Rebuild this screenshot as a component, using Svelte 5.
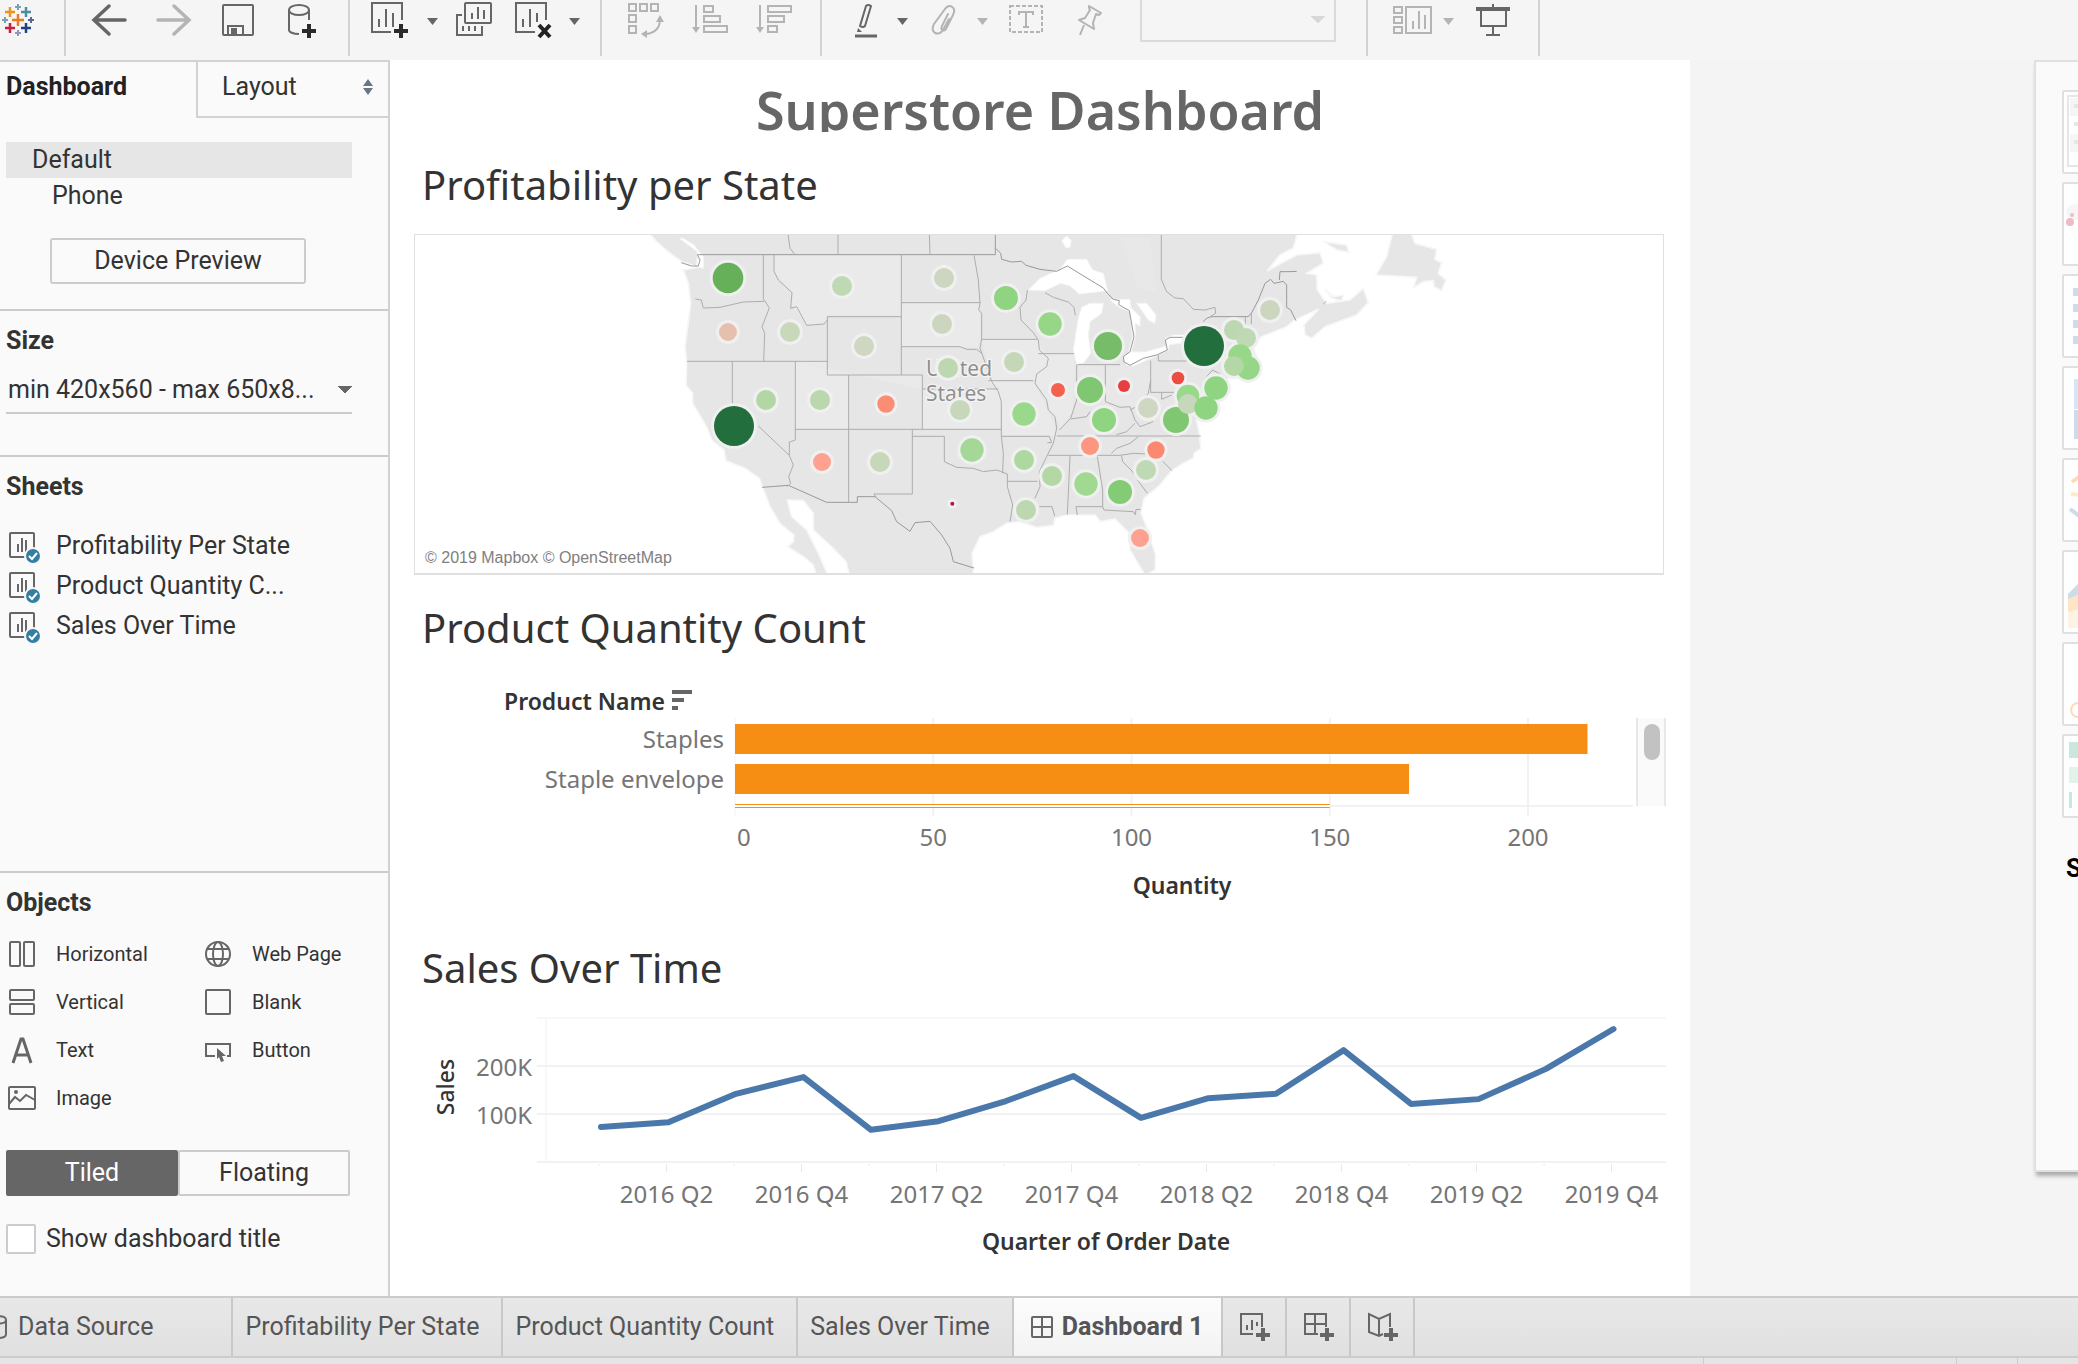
<script lang="ts">
	type Mark = [x: number, y: number, r: number, color: string];

	let view = $state('Default');
	let layoutMode = $state('Tiled');
	let activeTab = $state('Dashboard 1');
	let showTitle = $state(false);

	const sheets = ['Profitability Per State', 'Product Quantity C...', 'Sales Over Time'];

	const objects = [
		{ id: 'horizontal', label: 'Horizontal' },
		{ id: 'web', label: 'Web Page' },
		{ id: 'vertical', label: 'Vertical' },
		{ id: 'blank', label: 'Blank' },
		{ id: 'text', label: 'Text' },
		{ id: 'button', label: 'Button' },
		{ id: 'image', label: 'Image' }
	];

	const tabs = ['Profitability Per State', 'Product Quantity Count', 'Sales Over Time'];

	// one mark per state: size and color both encode profit
	const marks: Mark[] = [
		[324, 174, 46, '#66b059'],
		[324, 336, 27, '#e6c0ae'],
		[342, 618, 60, '#226e3c'],
		[666, 198, 30, '#c0d9b5'],
		[510, 336, 30, '#c8d9bb'],
		[732, 378, 30, '#cdd7c1'],
		[972, 174, 30, '#ccd6c0'],
		[966, 312, 30, '#ccd6be'],
		[1158, 234, 36, '#8ed481'],
		[1290, 312, 35, '#95d787'],
		[984, 444, 30, '#bdd8b1'],
		[1182, 426, 30, '#c4d8b7'],
		[438, 540, 30, '#b2d7a5'],
		[600, 540, 30, '#bad7ad'],
		[798, 552, 26, '#fc8d75'],
		[1314, 510, 21, '#f4624f'],
		[1020, 570, 30, '#c6d8b9'],
		[1212, 582, 35, '#9ad88b'],
		[606, 726, 27, '#ffa190'],
		[780, 726, 30, '#c6d8b9'],
		[1056, 690, 35, '#a5d898'],
		[1212, 720, 30, '#add89f'],
		[1296, 768, 30, '#b3d7a5'],
		[997, 851, 6, '#b5163a'],
		[1218, 870, 30, '#bdd8b1'],
		[1464, 378, 42, '#77bd69'],
		[1410, 510, 39, '#80c772'],
		[1512, 498, 18, '#e63f3f'],
		[1674, 474, 19, '#eb4c43'],
		[1452, 600, 36, '#8fd581'],
		[1584, 564, 30, '#cdd7c1'],
		[1668, 600, 39, '#80c772'],
		[1410, 678, 27, '#fd957f'],
		[1608, 690, 26, '#fb8970'],
		[1578, 750, 30, '#c0d9b5'],
		[1398, 792, 35, '#a1d993'],
		[1500, 816, 36, '#83cb75'],
		[1560, 954, 27, '#ffa190'],
		[1752, 378, 60, '#226e3c'],
		[1842, 330, 30, '#bcd8b0'],
		[1878, 354, 30, '#c0d9b5'],
		[1884, 444, 35, '#95d787'],
		[1860, 408, 35, '#96d788'],
		[1842, 438, 30, '#b3d7a5'],
		[1704, 528, 34, '#9ad88b'],
		[1704, 552, 30, '#c6d8b9'],
		[1788, 504, 35, '#8fd581'],
		[1758, 564, 35, '#8fd581'],
		[1950, 270, 30, '#ccd6be']
	];

	const products = [
		{ name: 'Staples', quantity: 215 },
		{ name: 'Staple envelope', quantity: 170 }
	];
	const quantityTicks = [50, 100, 150, 200];
	const qx = (q: number) => 321 + q * 3.965;

	const sales = [73, 83, 142, 177, 67, 85, 127, 179, 92, 133, 142, 233, 121, 131, 194, 277];
	const sx = (i: number) => 187 + i * 67.5;
	const sy = (v: number) => 152 - v * 0.48;
	const salesLine = sales.map((v, i) => `${sx(i)},${sy(v)}`).join(' ');
	const quarter = (i: number) => `${2016 + Math.floor(i / 4)} Q${(i % 4) + 1}`;
</script>

{#snippet caret()}
	<svg class="caret" viewBox="0 0 16 40" aria-hidden="true"><path d="M3 18h11l-5.500 7z" fill="currentColor" /></svg>
{/snippet}

<div class="app">
	<header class="toolbar">
		<div class="group logo">
			<svg class="icon" viewBox="0 0 40 40" fill="none" aria-label="Tableau" role="img">
				<path d="M18 14v12M12 20h12" stroke="#eb7b23" stroke-width="2.500" />
				<path d="M10 7v10M5 12h10" stroke="#eb9423" stroke-width="2.500" />
				<path d="M26 7v10M21 12h10" stroke="#4e8da0" stroke-width="2.500" />
				<path d="M10 23v10M5 28h10" stroke="#c8213b" stroke-width="2.500" />
				<path d="M26 23v10M21 28h10" stroke="#1f447e" stroke-width="2.500" />
				<path d="M18 4v6M15 7h6M5 17v6M2 20h6" stroke="#78a4b2" stroke-width="2" />
				<path d="M31 17v6M28 20h6" stroke="#5b6591" stroke-width="2" />
				<path d="M18 30v6M15 33h6" stroke="#9097b8" stroke-width="2" />
			</svg>
		</div>

		<div class="group roomy">
			<button type="button" aria-label="Undo">
				<svg class="icon" viewBox="0 0 40 40" fill="none" stroke="#666" stroke-width="3.500" stroke-linecap="round">
					<path d="M35 20H5M19 6L4 20l15 14" />
				</svg>
			</button>
			<button type="button" aria-label="Redo" disabled>
				<svg class="icon" viewBox="0 0 40 40" fill="none" stroke="#b4b4b4" stroke-width="3.500" stroke-linecap="round">
					<path d="M4 20h30M20 6l15 14-15 14" />
				</svg>
			</button>
			<button type="button" aria-label="Save">
				<svg class="icon" viewBox="0 0 40 40" fill="none" stroke="#666" stroke-width="2">
					<rect x="5" y="5" width="30" height="30" rx="1" />
					<path d="M10 35v-9h15v9" />
					<path d="M14 29h4v5h-4z" fill="#666" />
				</svg>
			</button>
			<button type="button" aria-label="New data source">
				<svg class="icon" viewBox="0 0 40 40" fill="none" stroke="#666" stroke-width="2">
					<ellipse cx="17" cy="10" rx="10" ry="5" />
					<path d="M7 10v20c0 2 4 4 10 4M27 10v10" />
					<path d="M27 24v14M20 31h14" stroke="#2b2b2b" stroke-width="4" />
				</svg>
			</button>
		</div>

		<div class="group sheet-tools">
			<div class="split">
				<button type="button" aria-label="New worksheet">
					<svg class="icon" viewBox="0 0 40 40" fill="none" stroke="#666" stroke-width="2">
						<path d="M32 20V3H2v29h19" />
						<path d="M9 27v-8M16 27V9M23 27V13" />
						<path d="M31 24v14M24 31h14" stroke="#2b2b2b" stroke-width="4" />
					</svg>
				</button>
				<button type="button" aria-label="New worksheet options">{@render caret()}</button>
			</div>
			<button type="button" aria-label="Duplicate">
				<svg class="icon" viewBox="0 0 40 40" fill="none" stroke="#666" stroke-width="2">
					<rect x="9" y="3" width="26" height="20" rx="1" />
					<path d="M16 19v-6M22 19V7M28 19v-9" />
					<path d="M6 15H1v20h25v-9M7 31v-5M13 31v-5M19 31v-5" />
				</svg>
			</button>
			<div class="split">
				<button type="button" aria-label="Clear sheet">
					<svg class="icon" viewBox="0 0 40 40" fill="none" stroke="#666" stroke-width="2">
						<path d="M34 20V3H4v29h19" />
						<path d="M11 27v-8M18 27V9M25 22v-9" />
						<path d="M27 25l11 12M38 25L27 37" stroke="#222" stroke-width="4" />
					</svg>
				</button>
				<button type="button" aria-label="Clear sheet options">{@render caret()}</button>
			</div>
		</div>

		<div class="group roomy">
			<button type="button" aria-label="Swap rows and columns" disabled>
				<svg class="icon" viewBox="0 0 40 40" fill="none" stroke="#b4b4b4" stroke-width="2">
					<path d="M3 4h7v7H3zM14 4h7v7h-7zM25 4h7v7h-7zM3 15h7v7H3zM3 26h7v7H3z" />
					<path d="M34 19c0 9-5 14-14 15" />
					<path d="M34 15l4 7h-8zM15 34l6-4v8z" fill="#b4b4b4" stroke="none" />
				</svg>
			</button>
			<button type="button" aria-label="Sort ascending" disabled>
				<svg class="icon" viewBox="0 0 40 40" fill="none" stroke="#b4b4b4" stroke-width="2">
					<path d="M6 5v24" />
					<path d="M2 27h8l-4 6z" fill="#b4b4b4" stroke="none" />
					<path d="M14 6h9v6h-9zM14 16h16v6H14zM14 26h23v6H14z" />
				</svg>
			</button>
			<button type="button" aria-label="Sort descending" disabled>
				<svg class="icon" viewBox="0 0 40 40" fill="none" stroke="#b4b4b4" stroke-width="2">
					<path d="M6 5v24" />
					<path d="M2 27h8l-4 6z" fill="#b4b4b4" stroke="none" />
					<path d="M14 6h23v6H14zM14 16h16v6H14zM14 26h9v6h-9z" />
				</svg>
			</button>
		</div>

		<div class="group">
			<div class="split">
				<button type="button" aria-label="Highlight">
					<svg class="icon" viewBox="0 0 40 40" fill="none" stroke="#666" stroke-width="2">
						<path d="M20 6q2-2 5 0L19 26q-2 2-5 0z" />
						<path d="M12 28l4 4h-5z" fill="#666" stroke="none" />
						<path d="M9 36h22" stroke-width="3" />
					</svg>
				</button>
				<button type="button" aria-label="Highlight options">{@render caret()}</button>
			</div>
			<div class="split">
				<button type="button" aria-label="Group members" disabled>
					<svg class="icon" viewBox="0 0 40 40" fill="none" stroke="#b4b4b4" stroke-width="2" stroke-linecap="round">
						<path d="M22 14l-6 12c-2 4 2 6 4 3l7-14c4-8-4-12-8-6L8 24c-5 9 5 13 9 6l6-11" />
					</svg>
				</button>
				<button type="button" aria-label="Group options" disabled>{@render caret()}</button>
			</div>
			<button type="button" aria-label="Show mark labels" disabled>
				<svg class="icon" viewBox="0 0 40 40" fill="none" stroke="#b4b4b4" stroke-width="2">
					<rect x="4" y="6" width="32" height="26" stroke-dasharray="4 2" />
					<path d="M13 15v-3h14v3M20 12v15M17 27h6" />
				</svg>
			</button>
			<button type="button" aria-label="Fix axes" disabled>
				<svg class="icon" viewBox="0 0 40 40" fill="none" stroke="#b4b4b4" stroke-width="2" stroke-linejoin="round">
					<path d="M27 6l12 7-2 2-3-1-3 9 1 6-15-9 6-2 5-8-1-2zM22 25l-4 10" />
				</svg>
			</button>
			<select class="fit" aria-label="Fit" disabled><option></option></select>
		</div>

		<div class="group">
			<div class="split">
				<button type="button" aria-label="Show or hide cards" disabled>
					<svg class="icon" viewBox="0 0 40 40" fill="none" stroke="#b4b4b4" stroke-width="2">
						<path d="M2 7h8v6H2zM2 17h8v6H2zM2 27h8v6H2zM14 7h25v26H14z" />
						<path d="M21 29v-8M27 29V11M33 29V15" />
					</svg>
				</button>
				<button type="button" aria-label="Card options" disabled>{@render caret()}</button>
			</div>
			<button type="button" aria-label="Presentation mode">
				<svg class="icon" viewBox="0 0 40 40" fill="none" stroke="#666" stroke-width="2">
					<path d="M21 4v3M9 11v15h25V11M21 26v9M14 35h14" />
					<path d="M4 9h34" stroke-width="4" />
				</svg>
			</button>
		</div>
	</header>

	<div class="workspace">
		<aside class="sidebar">
			<div class="pane-tabs">
				<button type="button" class="pane-tab current">Dashboard</button>
				<button type="button" class="pane-tab other">
					Layout
					<svg class="spin" viewBox="0 0 12 18" fill="#687587" aria-hidden="true"><path d="M1 8l5-7 5 7zM1 10l5 7 5-7z" /></svg>
				</button>
			</div>

			<section class="devices">
				<button type="button" class="device" class:selected={view === 'Default'} onclick={() => (view = 'Default')}>Default</button>
				<button type="button" class="device phone" class:selected={view === 'Phone'} onclick={() => (view = 'Phone')}>Phone</button>
				<button type="button" class="preview">Device Preview</button>
			</section>

			<section class="size">
				<label for="size">Size</label>
				<select id="size">
					<option>min 420x560 - max 650x8...</option>
				</select>
			</section>

			<section class="sheets">
				<h3>Sheets</h3>
				<ul>
					{#each sheets as sheet (sheet)}
						<li>
							<svg class="sheet-icon" viewBox="0 0 36 36" fill="none" stroke="#666" stroke-width="2" aria-hidden="true">
								<rect x="4" y="5" width="24" height="24" rx="1" />
								<path d="M12 24v-8M16 24V10M20 24V12" />
								<circle cx="27" cy="28" r="8" fill="#317fa2" stroke="#fafafa" />
								<path d="M23 28l3 3 5-6" stroke="#fff" />
							</svg>
							{sheet}
						</li>
					{/each}
				</ul>
			</section>

			<section class="objects">
				<h3>Objects</h3>
				<div class="object-grid">
					{#each objects as object (object.id)}
						<button type="button" class="object">
							<svg viewBox="0 0 30 30" fill="none" stroke="#666" stroke-width="2" aria-hidden="true">
								{#if object.id === 'horizontal'}
									<rect x="4" y="3" width="10" height="24" rx="1" />
									<rect x="18" y="3" width="10" height="24" rx="1" />
								{:else if object.id === 'vertical'}
									<rect x="4" y="3" width="24" height="10" rx="1" />
									<rect x="4" y="17" width="24" height="10" rx="1" />
								{:else if object.id === 'web'}
									<circle cx="16" cy="15" r="12" />
									<ellipse cx="16" cy="15" rx="5" ry="12" />
									<path d="M5 10h22M5 20h22" />
								{:else if object.id === 'blank'}
									<rect x="4" y="3" width="24" height="24" rx="1" />
								{:else if object.id === 'text'}
									<path d="M7 28l8-24h2l8 24M9 20h14" stroke-width="3" />
								{:else if object.id === 'button'}
									<path d="M13 21H4V9h24v12h-3" />
									<path d="M15 13l9 8h-4l2 5-3 1-2-5-2 2z" fill="#666" stroke="none" />
								{:else}
									<rect x="3" y="4" width="26" height="22" rx="1" />
									<path d="M3 21l6-7 5 4 6-6 9 5" />
									<circle cx="10" cy="9" r="2" fill="#666" stroke="none" />
								{/if}
							</svg>
							{object.label}
						</button>
					{/each}
				</div>
				<div class="toggle">
					{#each ['Tiled', 'Floating'] as mode}
						<button type="button" class:on={layoutMode === mode} aria-pressed={layoutMode === mode} onclick={() => (layoutMode = mode)}>{mode}</button>
					{/each}
				</div>
				<label class="check">
					<input type="checkbox" bind:checked={showTitle} />
					Show dashboard title
				</label>
			</section>
		</aside>

		<main class="dashboard">
			<h1>Superstore Dashboard</h1>

			<section>
				<h2>Profitability per State</h2>
				<div class="map">
					<svg viewBox="-615 45 3744 1014" role="img" aria-label="Profit by state">
						<g fill="#e6e6e6" stroke="#f7f7f7" stroke-width="5">
							<path
								d="M80 30L110 66 140 92 185 125 215 135 235 142 190 150 205 190 212 250 203 320 195 380 200 425 198 495 218 520 218 550 245 595 262 625 275 660 312 690 318 722 375 745 418 775 428 802 450 860 480 910 522 945 520 965 503 980 550 1010 580 1035 590 1070 625 1070 600 1010 560 930 515 890 502 840 550 842 580 880 580 930 640 985 678 1025 690 1070
								1060 1070 1060 1045 1056 1000 1080 950 1120 935 1160 910 1200 905 1250 922 1300 916 1305 895 1340 885 1425 885 1442 905 1485 897 1525 937 1530 990 1560 1040 1575 1065 1605 1050 1607 1005 1580 920 1563 880 1572 835 1615 800 1655 752 1690 730 1720 715 1722 700 1743 685 1738 640 1730 600
								1770 570 1815 510 1830 460 1920 440 1900 380 1925 350 2000 320 2025 300 2095 268 2052 315 2055 345 2075 355 2115 320 2210 285 2245 248 2230 205 2190 240 2120 250 2092 210 2090 165 2060 160 2110 130 2100 98 2030 105 1942 152 1980 105 2020 85 2035 30z"
							/>
							<path d="M2110 65L2180 75 2187 97 2150 90zM2320 30L2300 110 2268 165 2390 172 2380 203 2410 185 2440 182 2442 200 2465 212 2478 180 2455 160 2465 128 2445 118 2450 88 2385 70 2370 30zM2115 208L2140 230 2170 225 2165 243 2135 235z" />
						</g>
						<g fill="#eaeaea">
							<path d="M462 106h380v180h-220v25l-60 5-45-60v-40l-55-60zM844 250h236l2 105-12 30-30-5h-196zM1085 360h165l35 55-38 65h-130zM1110 484h130l50 100 20 60h-165v-110zM1255 402h108l-5 170-35 50-80-135z" />
							<path d="M526 424h96v41h284v162h236v-120h-236M526 424v204h160v-163z" />
							<path d="M1332 434h260v80l-40 50-100-15zM1500 50h90l20 170-60-20z" opacity=".5" />
						</g>
						<g fill="#fff" stroke="#f5f5f5" stroke-width="3">
							<path d="M178 55L205 75 232 95 230 140 250 145 250 110 240 98 222 75 190 55z" />
							<path d="M1225 210L1260 175 1320 148 1342 118 1400 118 1418 150 1450 160 1463 212 1440 215 1378 222 1350 198 1322 190 1275 212z" />
							<path d="M1385 262L1410 250 1450 250 1445 280 1410 305 1405 345 1412 400 1390 430 1370 432 1360 390 1374 300z" />
							<path d="M1470 240L1530 238 1532 262 1560 290 1560 318 1545 310 1546 350 1534 395 1525 398 1538 350 1530 275 1495 260zM1550 250L1580 250 1608 285 1605 310 1585 300z" />
							<path d="M1508 412L1530 396 1575 396 1640 378 1636 355 1660 345 1700 345 1697 368 1648 374 1645 390 1600 412 1540 438 1520 436z" />
							<path d="M1325 62L1340 48 1354 62 1350 82 1338 84z" />
						</g>
						<g fill="none" stroke="#adadad" stroke-width="3">
							<path stroke="#999" d="M184 128L215 138 235 138 240 120 232 104H1126V42M1128 86L1142 100 1145 118 1175 126 1205 124 1218 136 1260 148 1310 154 1342 138 1450 204 1462 220 1480 238 1498 242 1496 254 1528 272 1542 350 1530 395 1510 410 1512 426 1530 436 1570 415 1610 405 1642 390 1636 360 1650 352 1695 352M1750 305Q1760 290 1780 290H1885L1895 278 1915 240 1935 190 1952 178 1962 190 1990 184 2000 195V262L2012 270 2028 302M1978 180L1980 155 2010 155 2030 154" />
							<path stroke="#999" d="M426 802L505 796 620 847H712V830H765L815 872 830 905 870 934 885 908 930 904 965 945 990 985 1000 1025 1062 1044" />
							<path d="M504 42L510 85 525 104M654 42V104M928 42L930 104M1624 42V178L1640 215 1665 234 1690 236 1720 268 1755 270 1785 262 1787 280 1770 290" />
							<path d="M430 104V236L448 264 426 320 434 340 431 424M226 237L244 240 250 264 300 262 370 246 432 244M201 424H622M337 424V560M415 618L508 706M526 424V660L508 666 508 706 520 735 506 770 512 790 502 800M462 104V154L475 180 516 218 512 265 530 260 560 316 612 312 622 300" />
							<path d="M844 104V465M622 290H844M622 290V465H907V628M686 465V847M526 628H1144M844 248H1082M844 380H1020L1040 388 1070 388 1085 400M1062 106L1075 180 1080 250 1076 270 1085 280 1085 355 1080 385 1100 440 1115 484 1135 515 1144 545V648L1150 700 1148 760" />
							<path d="M907 507H1135M877 628V822H762L768 832M877 649H973V725L1010 742 1060 745 1090 755 1130 750 1162 762V800L1178 855 1170 905M1144 649H1288L1295 668 1282 668M1162 784H1252M1083 358H1252M1105 482H1240M1255 401H1362M1222 210L1218 240 1200 262 1203 300 1240 338 1255 360 1258 390 1285 415 1280 440 1250 462 1245 490 1280 540 1285 570 1305 590 1310 625 1300 670 1280 710 1258 755 1260 800 1245 835M1275 218L1300 232 1345 246 1362 262 1366 286" />
							<path d="M1370 434V540L1352 595 1318 630M1456 436V545L1500 562 1530 560 1545 600 1560 620 1600 605M1372 434H1500M1592 422V517H1760M1615 405V423H1770M1592 480L1585 520 1550 560 1530 570M1352 597L1400 590 1410 575M1310 648H1742M1285 706H1500M1474 700L1490 685 1530 670 1555 650M1545 610L1520 635 1490 644" />
							<path d="M1350 708L1342 884M1432 710L1448 810V860L1452 870 1540 875 1546 884 1548 868 1562 869M1368 860H1448M1368 860L1372 885M1258 860H1296L1304 888M1500 706L1540 700 1585 702M1505 708L1508 725 1535 752 1560 790 1582 820M1628 724L1656 752M1625 517V538L1655 525M1876 290V320M1894 278V312M1760 470L1778 450 1800 462M2110 253L2118 244" />
						</g>
						<text class="country" x="918" y="468">United</text>
						<text class="country" x="918" y="543">States</text>
						{#each marks as [x, y, r]}
							<circle cx={x} cy={y} r={r + 9} fill="#f0f0f0" />
						{/each}
						{#each marks as [x, y, r, color]}
							<circle cx={x} cy={y} {r} fill={color} />
						{/each}
					</svg>
					<small>© 2019 Mapbox © OpenStreetMap</small>
				</div>
			</section>

			<section>
				<h2>Product Quantity Count</h2>
				<svg class="chart quantity" viewBox="0 0 1252 235" role="img" aria-label="Quantity by product name">
					<text class="strong" x="90" y="30">Product Name</text>
					<path d="M258 10h20v4h-20zM258 18h12v4h-12zM258 26h6v4h-6z" fill="#666" />
					<path d="M321 38v98" stroke="#f3f3f3" />
					{#each quantityTicks as tick}
						<path d="M{qx(tick)} 38v98" stroke="#f2f2f2" stroke-width="2" />
						<text class="axis" x={qx(tick)} y="166" text-anchor="middle">{tick}</text>
					{/each}
					<text class="axis" x="323" y="166">0</text>
					<path d="M321 126h898" stroke="#f2f2f2" stroke-width="2" />
					{#each products as product, i}
						<text class="axis" x="310" y={68 + i * 40} text-anchor="end">{product.name}</text>
						<rect x="321" y={44 + i * 40} width={qx(product.quantity) - 321} height="30" fill="#f68e13" />
					{/each}
					<rect x="321" y="124" width={qx(150) - 321} height="4" fill="#fff" />
					<path d="M321 124.500H{qx(150)}M321 127.500H{qx(150)}" stroke="#f68e13" />
					<rect x="1222" y="38" width="30" height="88" fill="#fafafa" />
					<path d="M1223 38v88M1251 38v88" stroke="#e8e8e8" stroke-width="2" />
					<rect x="1230" y="44" width="16" height="36" rx="8" fill="#c2c2c2" />
					<text class="strong" x="768" y="214" text-anchor="middle">Quantity</text>
				</svg>
			</section>

			<section>
				<h2>Sales Over Time</h2>
				<svg class="chart" viewBox="0 0 1252 250" role="img" aria-label="Sales by quarter">
					<path d="M123 8h1129M132 8v144" stroke="#f0f0f0" />
					<path d="M123 56h1129M123 104h1129M123 152h1129" stroke="#f2f2f2" stroke-width="2" />
					<text class="strong side" x="-77" y="40" transform="rotate(-90)" text-anchor="middle">Sales</text>
					<text class="axis" x="118" y="66" text-anchor="end">200K</text>
					<text class="axis" x="118" y="114" text-anchor="end">100K</text>
					{#each sales as _, i}
						<path d="M{sx(i) - 2} 154v{i % 2 ? 8 : 2}" stroke="#e8e8e8" />
						{#if i % 2}
							<text class="axis" x={sx(i) - 2} y="193" text-anchor="middle">{quarter(i)}</text>
						{/if}
					{/each}
					<polyline points={salesLine} fill="none" stroke="#4b78aa" stroke-width="6" stroke-linejoin="round" stroke-linecap="round" />
					<text class="strong" x="692" y="240" text-anchor="middle">Quarter of Order Date</text>
				</svg>
			</section>
		</main>

		<div class="gutter">
			<aside class="show-me">
				<ul>
					<li><svg viewBox="0 0 84 80"><path d="M4 4h74v70H4z" fill="#fff" stroke="#e6e6e6" stroke-width="2" /><path d="M6 6h70v18H6zM6 42h70v18H6z" fill="#f5f5f5" /><path d="M10 14h14M10 32h14M10 50h14M34 14h30M34 32h30M34 50h30" stroke="#e6e6e6" stroke-width="4" /></svg></li>
					<li><svg viewBox="0 0 84 80"><ellipse cx="12" cy="28" rx="10" ry="8" fill="#f5f5f5" /><circle cx="6" cy="38" r="4" fill="#edbcc6" /><circle cx="8" cy="31" r="2" fill="#edbcc6" /></svg></li>
					<li><svg viewBox="0 0 84 80" fill="#ccdce9"><path d="M9 12h60v8H9zM9 28h50v8H9zM9 44h40v8H9zM9 60h30v8H9z" /></svg></li>
					<li><svg viewBox="0 0 84 80"><path d="M10 11h50v30H10z" fill="#d6e6f2" /><path d="M10 42h50v29H10z" fill="#ccdce9" /></svg></li>
					<li><svg viewBox="0 0 84 80" fill="none" stroke-width="4"><path d="M8 22L30 6" stroke="#fcdcb5" /><path d="M7 34L40 38" stroke="#fcebc8" /><path d="M6 49L26 64" stroke="#ccdce9" /></svg></li>
					<li><svg viewBox="0 0 84 80"><path d="M4 42L28 18V76H4z" fill="#ccdce9" /><path d="M4 47L28 36V76H4z" fill="#fee5c6" /><path d="M4 60L28 54V76H4z" fill="#fef3e5" /></svg></li>
					<li><svg viewBox="0 0 84 80" fill="none"><circle cx="14" cy="66" r="7" stroke="#fddcbd" stroke-width="2" /></svg></li>
					<li><svg viewBox="0 0 84 80"><path d="M5 6h50v16H5zM5 56h3v16H5z" fill="#c9e7dc" /><path d="M5 31h40v16H5z" fill="#e2f3eb" /></svg></li>
				</ul>
				<strong>Select</strong>
			</aside>
		</div>
	</div>

	<nav class="sheet-tabs" aria-label="Sheets">
		<button type="button" class="tab source">
			<svg viewBox="0 0 8 26" fill="none" stroke="#666" stroke-width="2" aria-hidden="true"><path d="M-6 6c0-5 12-5 12 0s-12 4-12 0M6 6v14c0 3-3 4-8 4" /></svg>
			Data Source
		</button>
		{#each tabs as tab (tab)}
			<button type="button" class="tab" class:active={activeTab === tab} onclick={() => (activeTab = tab)}>{tab}</button>
		{/each}
		<button type="button" class="tab board" class:active={activeTab === 'Dashboard 1'} onclick={() => (activeTab = 'Dashboard 1')}>
			<svg viewBox="0 0 24 24" fill="none" stroke="#666" stroke-width="2" aria-hidden="true"><rect x="2" y="2" width="20" height="20" rx="1" /><path d="M2 12h20M12 2v20" /></svg>
			Dashboard 1
		</button>
		<button type="button" class="tab add" aria-label="New worksheet">
			<svg viewBox="0 0 32 32" fill="none" stroke="#666" stroke-width="2"><path d="M24 16V3H3v20h12M9 19v-5M14 19V9M19 15v-4" /><path d="M25 17v13M18 24h14" stroke-width="4" /></svg>
		</button>
		<button type="button" class="tab add" aria-label="New dashboard">
			<svg viewBox="0 0 32 32" fill="none" stroke="#666" stroke-width="2"><path d="M24 16V3H3v20h13M3 13h21M13 3v20" /><path d="M25 17v13M18 24h14" stroke-width="4" /></svg>
		</button>
		<button type="button" class="tab add" aria-label="New story">
			<svg viewBox="0 0 32 32" fill="none" stroke="#666" stroke-width="2"><path d="M24 16V3l-11 5L3 3v18l10 4 4-2M13 8v17" /><path d="M25 17v13M18 24h14" stroke-width="4" /></svg>
		</button>
	</nav>
	<footer class="status"><span class="user"></span><span></span><span></span></footer>
</div>

<style>
	:global(body) {
		margin: 0;
	}

	.app {
		display: flex;
		flex-direction: column;
		min-height: 100vh;
		overflow: hidden;
		background: #f4f4f4;
		color: #333;
		font-family: Roboto, 'Liberation Sans', sans-serif;
		font-size: 25px;
		line-height: 30px;
	}

	button,
	select {
		margin: 0;
		padding: 0;
		border: 0;
		border-radius: 0;
		background: none;
		color: inherit;
		font: inherit;
	}

	ul {
		margin: 0;
		padding: 0;
		list-style: none;
	}

	svg {
		display: block;
	}

	/* toolbar */
	.toolbar {
		display: flex;
		height: 60px;
		background: #f5f5f5;
	}

	.group {
		display: flex;
		align-items: flex-start;
		gap: 16px;
		height: 56px;
		padding: 0 26px 0 24px;
		border-right: 2px solid #d2d2d2;
	}

	.logo {
		padding: 0 24px 0 0;
	}

	.roomy {
		gap: 24px;
	}

	.sheet-tools {
		padding: 0 18px 0 20px;
	}

	.split {
		display: flex;
		gap: 8px;
	}

	.sheet-tools .split {
		gap: 14px;
	}

	.icon {
		width: 40px;
		height: 40px;
	}

	.caret {
		width: 16px;
		height: 40px;
		color: #666;
	}

	button:disabled .caret {
		color: #b4b4b4;
	}

	.fit {
		appearance: none;
		width: 196px;
		height: 42px;
		margin: 0 4px 0 22px;
		border: 2px solid #d0d0d0;
		border-top: 0;
		border-radius: 0 0 2px 2px;
		background: linear-gradient(to bottom left, #ccc 50%, transparent 0) right 16px center / 7px 8px no-repeat,
			linear-gradient(to bottom right, #ccc 50%, transparent 0) right 9px center / 7px 8px no-repeat;
	}

	/* workspace */
	.workspace {
		display: grid;
		flex: 1;
		grid-template-columns: 390px minmax(0, 1300fr) minmax(0, 388fr);
	}

	.sidebar {
		display: flex;
		flex-direction: column;
		border-top: 2px solid #d2d2d2;
		border-right: 2px solid #d2d2d2;
		background: #fafafa;
	}

	.pane-tabs {
		display: grid;
		grid-template-columns: 196px 1fr;
		height: 56px;
	}

	.pane-tab {
		padding: 0 0 6px 6px;
		text-align: left;
	}

	.current {
		font-weight: 700;
		color: #222;
	}

	.other {
		display: flex;
		align-items: center;
		justify-content: space-between;
		padding: 0 14px 4px 24px;
		border-bottom: 2px solid #d2d2d2;
		border-left: 2px solid #d2d2d2;
	}

	.spin {
		width: 12px;
		height: 18px;
	}

	.sidebar section {
		padding: 15px 0 0 6px;
		border-bottom: 2px solid #ccc;
	}

	.sidebar h3,
	.size label {
		display: block;
		margin: 0;
		font-size: 25px;
		font-weight: 700;
		line-height: 30px;
	}

	.sidebar .devices {
		padding: 24px 36px 25px 6px;
	}

	.device {
		display: block;
		width: 100%;
		height: 36px;
		padding-left: 26px;
		text-align: left;
	}

	.phone {
		padding-left: 46px;
	}

	.selected {
		background: #e6e6e6;
	}

	.preview {
		display: block;
		width: 256px;
		height: 46px;
		margin: 24px 0 0 44px;
		border: 2px solid #ccc;
		border-radius: 3px;
	}

	.sidebar .size {
		padding-right: 36px;
		padding-bottom: 41px;
	}

	.size select {
		appearance: none;
		width: 100%;
		height: 46px;
		margin-top: 12px;
		padding: 0 16px 0 2px;
		border-bottom: 2px solid #ccc;
		background: linear-gradient(to bottom left, #666 50%, transparent 0) right 7px center / 7px 8px no-repeat,
			linear-gradient(to bottom right, #666 50%, transparent 0) right 0 center / 7px 8px no-repeat;
	}

	.sidebar .sheets {
		flex: 1;
	}

	.sheets ul {
		margin-top: 24px;
	}

	.sheets li {
		display: flex;
		align-items: center;
		gap: 14px;
		height: 40px;
	}

	.sheet-icon {
		width: 36px;
		height: 36px;
	}

	.sidebar .objects {
		padding-bottom: 42px;
		border-bottom: 0;
	}

	.object-grid {
		display: grid;
		grid-template-columns: 196px 1fr;
		margin: 12px 0 28px;
	}

	.object {
		display: flex;
		align-items: center;
		gap: 20px;
		height: 48px;
		font-size: 20px;
	}

	.object svg {
		width: 30px;
		height: 30px;
	}

	.toggle {
		display: grid;
		grid-template-columns: 1fr 1fr;
		height: 46px;
		margin: 0 38px 28px 0;
	}

	.toggle button {
		border: 2px solid #ccc;
		border-radius: 2px;
	}

	.toggle .on {
		border-color: #666;
		background: #666;
		color: #fff;
	}

	.check {
		display: flex;
		align-items: center;
		gap: 10px;
	}

	.check input {
		appearance: none;
		width: 30px;
		height: 30px;
		margin: 0;
		border: 2px solid #ccc;
		border-radius: 2px;
		background: #fff;
	}

	.check input:checked {
		background: #666;
	}

	/* dashboard */
	.dashboard {
		padding: 0 24px;
		background: #fff;
		font-family: 'Noto Sans', 'Open Sans', sans-serif;
	}

	h1 {
		box-sizing: border-box;
		height: 72px;
		margin: 0;
		padding-top: 14px;
		overflow: hidden;
		color: #666;
		font-size: 52px;
		font-weight: 600;
		line-height: 72px;
		text-align: center;
	}

	h2 {
		margin: 25px 8px 14px;
		font-size: 40px;
		font-weight: 400;
		line-height: 56px;
	}

	.map {
		position: relative;
		margin: 0 2px 0 0;
		border: 1px solid #e0e0e0;
		border-bottom-width: 2px;
	}

	h2 + .map {
		margin-top: 21px;
	}

	.map svg {
		width: 100%;
	}

	.country {
		fill: #8f8f8f;
		stroke: #f3f3f3;
		stroke-width: 8px;
		paint-order: stroke;
		font-size: 63px;
	}

	.map small {
		position: absolute;
		bottom: 0;
		left: 10px;
		color: #808080;
		font-family: 'Liberation Sans', Arial, sans-serif;
		font-size: 16px;
	}

	.chart {
		width: 100%;
	}

	.quantity {
		margin-top: 24px;
	}

	.axis {
		fill: #757575;
		font-size: 24px;
	}

	.strong {
		fill: #333;
		font-size: 23px;
		font-weight: 600;
	}

	.side {
		font-weight: 500;
	}

	/* show me palette, runs off the right edge */
	.gutter {
		display: flex;
		justify-content: flex-end;
		align-items: flex-start;
		overflow: hidden;
	}

	.show-me {
		box-sizing: border-box;
		width: 44px;
		height: 1112px;
		padding: 28px 0 0 26px;
		overflow: hidden;
		border: 2px solid #e0e0e0;
		border-right: 0;
		background: #fafafa;
		box-shadow: 2px 4px 4px #aaa;
	}

	.show-me li {
		width: 84px;
		height: 80px;
		margin-bottom: 8px;
		border: 2px solid #e0e0e0;
		border-radius: 2px;
		background: #fff;
	}

	.show-me strong {
		display: block;
		margin: 36px 0 0 4px;
		color: #000;
	}

	/* sheet tabs */
	.sheet-tabs {
		display: flex;
		height: 58px;
		border-top: 2px solid #ccc;
		border-bottom: 2px solid #ccc;
		background: linear-gradient(#e8e8e8, #e0e0e0);
	}

	.tab {
		display: flex;
		align-items: center;
		padding: 0 22px 0 12px;
		border-right: 2px solid #c8c8c8;
		color: #555;
		white-space: nowrap;
	}

	.source {
		gap: 10px;
		padding: 0 78px 0 0;
	}

	.source svg {
		width: 8px;
		height: 26px;
	}

	.board {
		gap: 8px;
		padding: 0 18px 0 16px;
	}

	.board svg {
		width: 24px;
		height: 24px;
	}

	.active {
		background: linear-gradient(#fcfcfc, #f3f3f3);
		font-weight: 700;
	}

	.add {
		padding: 0 15px;
	}

	.add svg {
		width: 32px;
		height: 32px;
	}

	.status {
		display: flex;
		justify-content: flex-end;
		height: 6px;
		background: #e5e5e5;
	}

	.status span {
		width: 60px;
		border-left: 1px solid #ccc;
	}

	.status .user {
		width: 252px;
	}
</style>
